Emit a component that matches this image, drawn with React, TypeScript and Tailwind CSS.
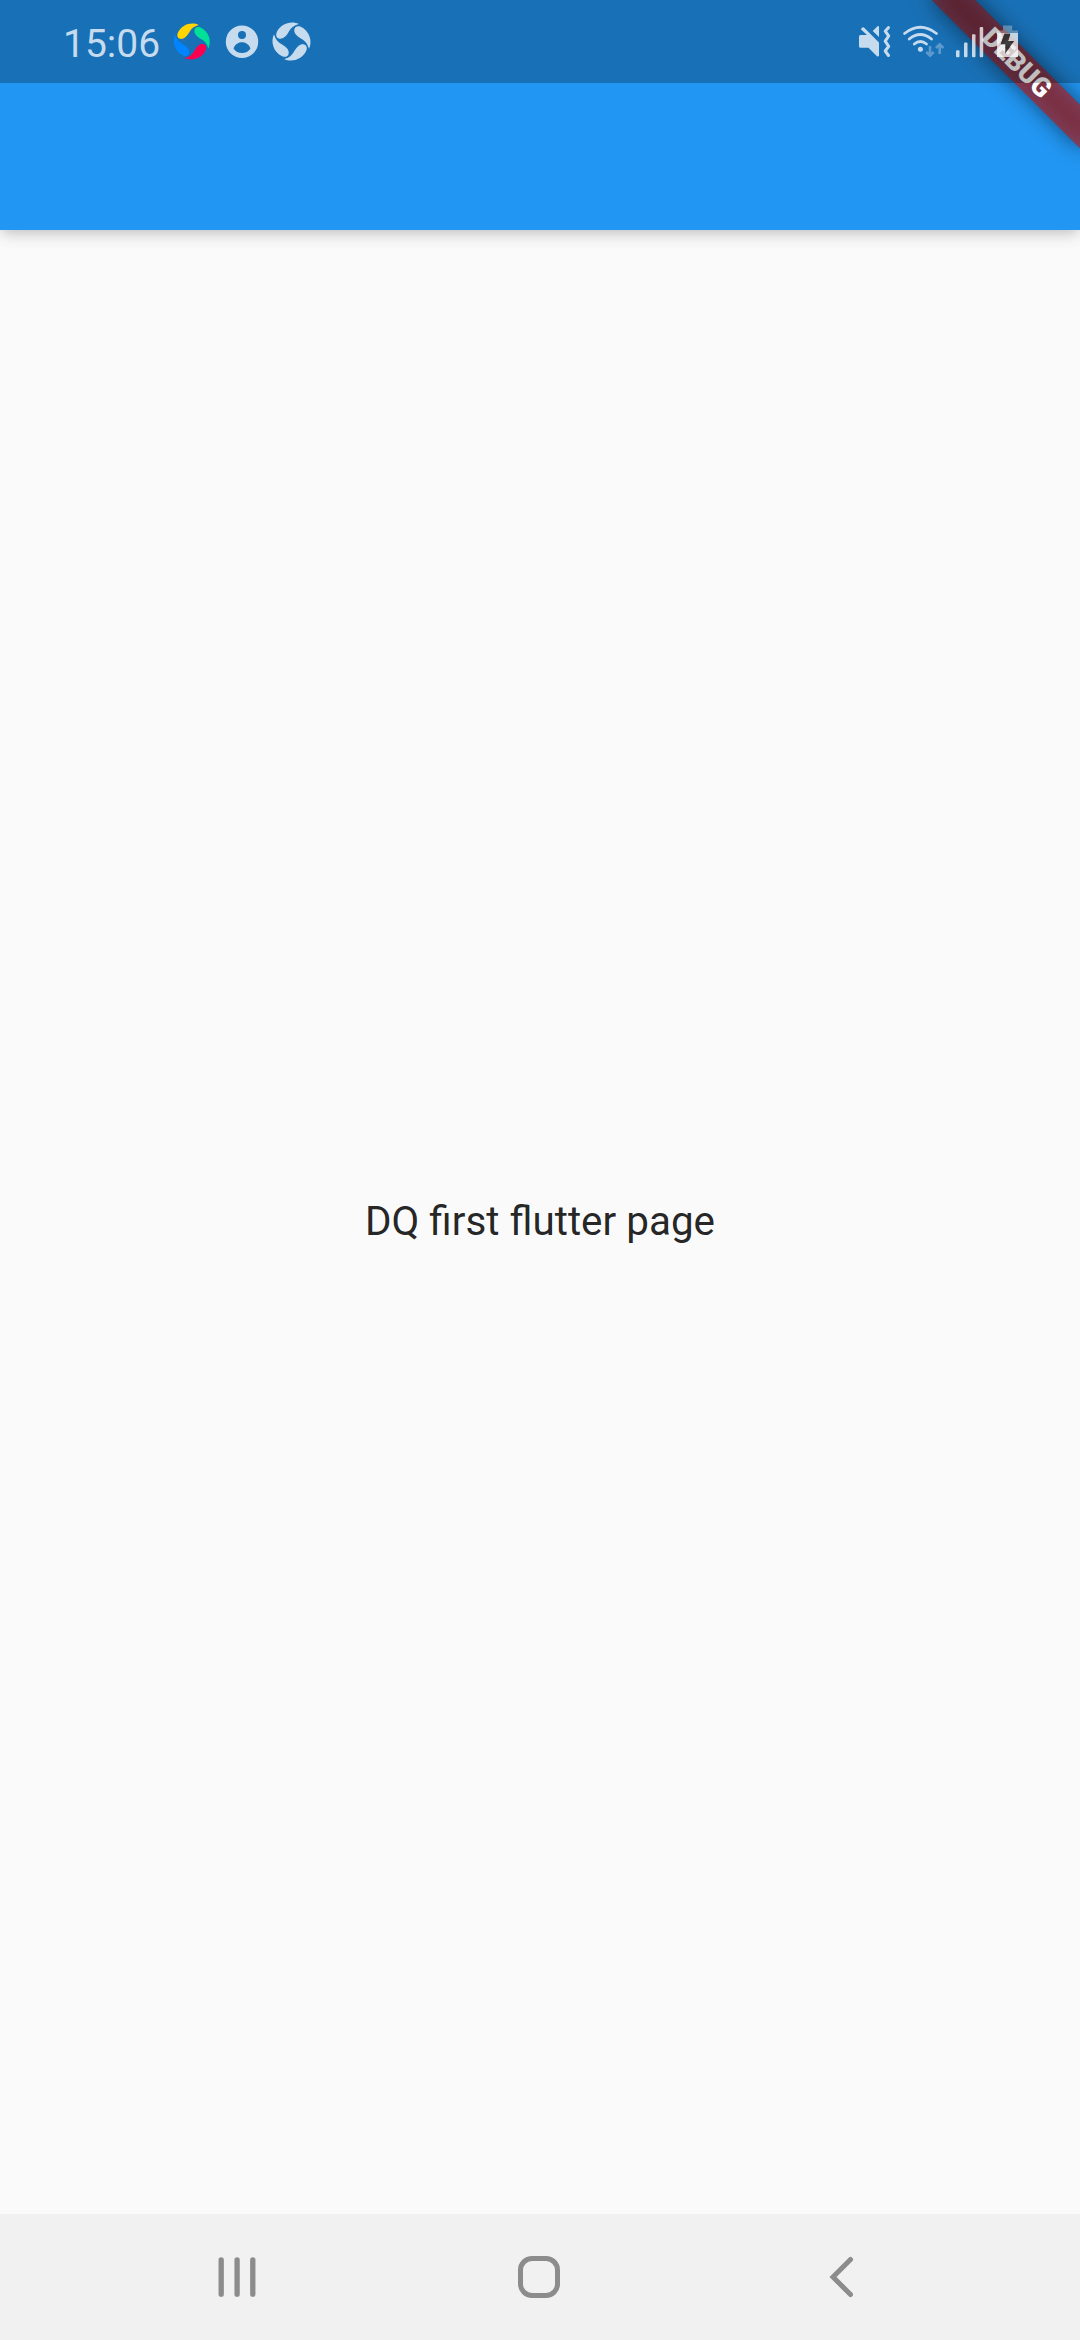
const BLADE = "M20,-48 C0,-58 -30,-50 -41,-24 C-46,-8 -30,-3 -19,-12 C-4,-24 -8,-40 20,-48 Z";
const BOLT = "M1004.5 33.7H1010.3L1008.2 41H1014L1005.300 53.5V44.300H1000.700Z";
const LIGHT = "#c6dbed";

function Swirl({ colors, scale, cx }: { colors: string[]; scale: number; cx: number }) {
  return (
    <g transform={`translate(${cx} 41.5) scale(${scale})`}>
      {colors.map((c, i) => (
        <path key={i} d={BLADE} fill={c} transform={`rotate(${i * 90})`} />
      ))}
    </g>
  );
}

function StatusBar() {
  return (
    <div className="relative z-20 flex h-[83px] w-full items-center bg-black/25 pl-[63px]">
      <span className="w-[107px] pt-[6px] text-[39px] leading-[77px] text-[#c6dbed]">15:06</span>
      <svg className="h-[83px] w-[46px] shrink-0" viewBox="170 0 46 83">
        <Swirl cx={191.8} scale={0.345} colors={["#ffd400", "#00e096", "#ff0050", "#0084ff"]} />
      </svg>
      <svg className="h-[83px] w-[50px] shrink-0" viewBox="216 0 50 83">
        <path
          fill={LIGHT}
          fillRule="evenodd"
          d="M242 25.5a16.2 16.2 0 1 0 0 32.4a16.2 16.2 0 1 0 0-32.4Z M242 31a4 4 0 1 1 0 8a4 4 0 1 1 0-8Z M233.5 48.5C235 44 239 42.3 242 42.3S249 44 250.5 48.5C248.5 51.5 245.5 53 242 53S235.5 51.5 233.5 48.5Z"
        />
      </svg>
      <svg className="h-[83px] w-[50px] shrink-0" viewBox="266 0 50 83">
        <Swirl cx={291.5} scale={0.365} colors={[LIGHT, LIGHT, LIGHT, LIGHT]} />
      </svg>
      <svg className="ml-auto h-[83px] w-[45px] shrink-0" viewBox="855 0 45 83">
        <path
          fill={LIGHT}
          d="M860.5 35H867L861 29.5Q861.5 26.8 864 27.4L879 42.5V55.500Q878.500 57.200 877 56.300L868.5 47.7H860.5Q859 47.7 859 46.2V36.5Q859 35 860.5 35Z M872.7 31L877.500 26.200Q879 25.600 879 27V37Z"
        />
        <path
          fill="none"
          stroke={LIGHT}
          strokeWidth="3"
          strokeLinecap="round"
          strokeLinejoin="round"
          d="M888.500 27.5L885.2 31.200L888.700 36L885.200 41.200L888.700 46.300L885.200 51L888.500 55.5"
        />
      </svg>
      <svg className="h-[83px] w-[50px] shrink-0" viewBox="900 0 50 83">
        <g fill="none" stroke={LIGHT} strokeWidth="2.8" strokeLinecap="round">
          <path d="M904.5 33.5Q920.3 21 936.5 33.5" />
          <path d="M909.2 39Q920.3 30 931.5 39" />
          <path d="M914.3 44Q920.3 39 926.5 44" />
        </g>
        <circle cx="920.4" cy="49.3" r="2.5" fill={LIGHT} />
        <path
          fill="none"
          stroke="#5c99cc"
          strokeWidth="2.6"
          d="M930 46V56M926.3 52L930 55.7L933.7 52M939.7 54V44M936 48L939.7 44.3L943.4 48"
        />
      </svg>
      <svg className="h-[83px] w-[130px] shrink-0" viewBox="950 0 130 83">
        <g fill="#fff" fillOpacity="0.75">
          <rect x="956" y="50.300" width="3.5" height="7" rx="1" />
          <rect x="964" y="42.5" width="3.5" height="14.8" rx="1" />
          <rect x="972" y="34.3" width="3.5" height="23" rx="1" />
          <rect x="979.7" y="27" width="3.5" height="30.300" rx="1" />
          <path d={`M997 33H1018V57H997Z ${BOLT}`} fillRule="evenodd" />
        </g>
        <path fill="#fff" fillOpacity="0.3" d="M1003 25.5H1012.200V30.5H1018V33H997V30.5H1003Z" />
        <path fill="#333" fillOpacity="0.92" d={BOLT} />
      </svg>
    </div>
  );
}

function DebugBanner() {
  return (
    <div className="pointer-events-none absolute top-0 right-0 z-10 h-[230px] w-[230px] overflow-hidden">
      <div className="absolute top-0 left-[230px] h-0 w-0 rotate-45">
        <div className="absolute top-[73.5px] left-[-105px] h-[31.5px] w-[210px] bg-black/50 blur-[10.4px]" />
        <div className="absolute top-[73.5px] left-[-105px] h-[31.5px] w-[210px] bg-[#b71c1c]/63 text-center text-[26.8px] leading-[31.5px] font-black text-white">
          DEBUG
        </div>
      </div>
    </div>
  );
}

function NavigationBar() {
  return (
    <nav className="flex h-[126px] shrink-0 bg-[#f1f1f1]">
      <svg className="h-[126px] w-[474px]" viewBox="0 0 474 126">
        <path
          d="M221.2 45.8V80.2M237.1 45.8V80.2M252.8 45.8V80.2"
          stroke="#8c8c8c"
          strokeWidth="5.3"
          strokeLinecap="round"
        />
      </svg>
      <svg className="h-[126px] w-[132px]" viewBox="474 0 132 126">
        <rect x="520.5" y="44.5" width="37" height="37" rx="11.5" fill="none" stroke="#8c8c8c" strokeWidth="5" />
      </svg>
      <svg className="h-[126px] w-[474px]" viewBox="606 0 474 126">
        <path d="M850.5 45.5L833 63L850.5 80.5" fill="none" stroke="#8c8c8c" strokeWidth="5" strokeLinecap="round" />
      </svg>
    </nav>
  );
}

export default function App() {
  return (
    <div className="relative flex h-[2340px] w-[1080px] flex-col overflow-hidden bg-[#fafafa] font-['Roboto',sans-serif]">
      <header className="relative z-[5] h-[230px] shrink-0 bg-[#2196f3] shadow-[0_5px_10px_-3px_rgba(0,0,0,0.12),0_8px_13px_rgba(0,0,0,0.06),0_2px_20px_rgba(0,0,0,0.07)]">
        <DebugBanner />
        <StatusBar />
      </header>
      <main className="flex flex-1 items-center justify-center">
        <p className="text-[40.4px] leading-[46px] text-black/87">DQ first flutter page</p>
      </main>
      <NavigationBar />
    </div>
  );
}
